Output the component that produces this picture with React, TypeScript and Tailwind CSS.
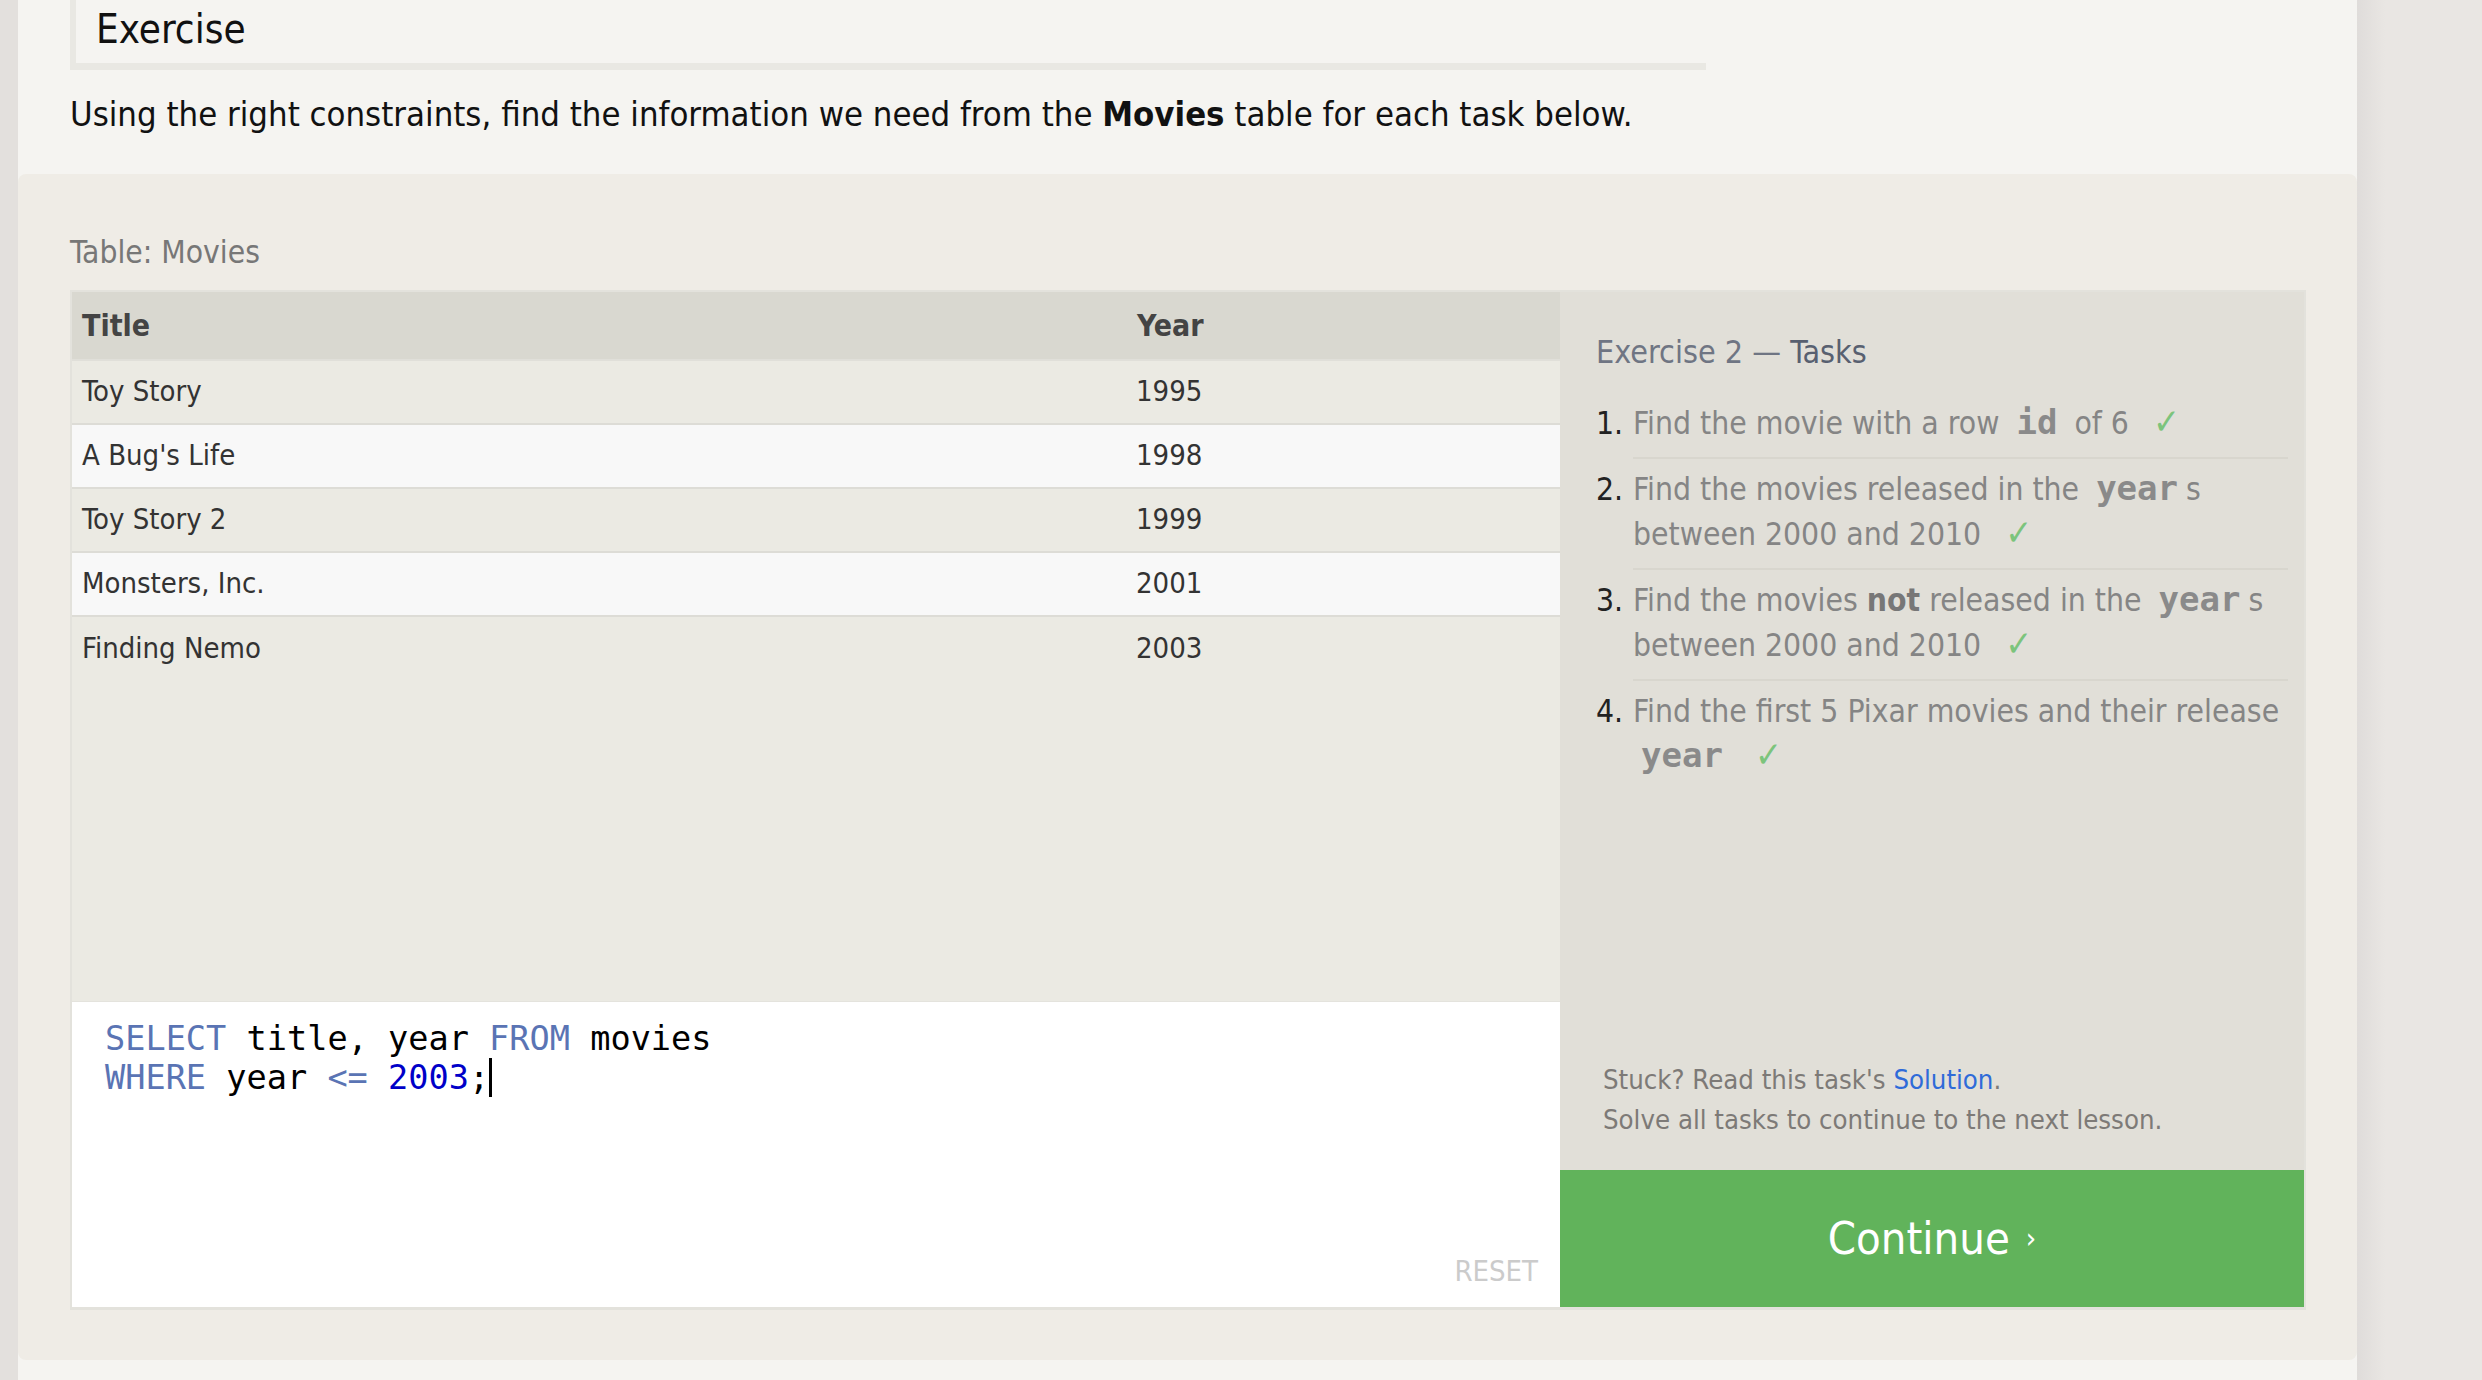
import React from "react";

const SANS = { fontFamily: '"DejaVu Sans Condensed", "DejaVu Sans", sans-serif', fontStretch: "condensed" as const };
const MONO = { fontFamily: '"DejaVu Sans Mono", monospace' };

const rows = [
  ["Toy Story", "1995"],
  ["A Bug's Life", "1998"],
  ["Toy Story 2", "1999"],
  ["Monsters, Inc.", "2001"],
  ["Finding Nemo", "2003"],
];

function Code({ children }: { children: React.ReactNode }) {
  return (
    <span className="px-[8px] font-bold text-[34px] leading-[0] text-[#8a8a8a]" style={MONO}>
      {children}
    </span>
  );
}

function Check() {
  return <span className="ml-[24px] text-[36px] leading-[0] text-[#7cc47c]">✓</span>;
}

function Task({ n, last, children }: { n: number; last?: boolean; children: React.ReactNode }) {
  return (
    <li className="flex">
      <div className="w-[37px] shrink-0 pt-[8px] leading-[45px] text-[#222]">{n}.</div>
      <div
        className={
          "flex-1 pt-[8px] pb-[11px] leading-[45px] text-[#858585] whitespace-nowrap " +
          (last ? "" : "border-b-2 border-[#d8d6ce]")
        }
      >
        {children}
      </div>
    </li>
  );
}

export default function App() {
  return (
    <div className="w-[2482px] h-[1380px] flex overflow-hidden bg-[#e9e6e3]" style={SANS}>
      <div className="w-[18px] shrink-0 bg-[#e3e0dd]" />
      <div className="w-[2339px] shrink-0 bg-[#f5f4f1] flex flex-col">
        <div className="px-[52px]">
          <div className="w-[1636px] border-l-[6px] border-b-[7px] border-[#e9e8e3] pl-[20px] pt-[6px] pb-[11px]">
            <h1 className="text-[40px] leading-[46px] text-[#111]">Exercise</h1>
          </div>
          <p className="mt-[20px] text-[34.4px] leading-[48px] text-[#111] whitespace-nowrap">
            Using the right constraints, find the information we need from the <b>Movies</b> table for each task below.
          </p>
        </div>

        <div className="mt-[36px] rounded-[8px] bg-[#efece6] pl-[52px] pr-[51px] pt-[58px] pb-[50px]">
          <div className="text-[31.5px] leading-[40px] text-[#777]">Table: Movies</div>
          <div className="mt-[18px] flex h-[1020px] border-2 border-b-[3px] border-[#e3e2dc]">
            {/* Left: table + editor */}
            <div className="flex-1 flex flex-col">
              <div className="h-[709px] bg-[#ebeae3]">
                <div className="flex h-[69px] items-center bg-[#d9d8d0] border-b-2 border-[#e0dfd9] font-bold text-[30px] text-[#444]">
                  <div className="w-[1053px] pl-[10px]">Title</div>
                  <div className="pl-[12px]">Year</div>
                </div>
                {rows.map(([t, y], i) => (
                  <div
                    key={t}
                    className={
                      "flex h-[64px] items-center text-[29px] text-[#333] " +
                      (i % 2 === 1 ? "bg-[#f8f8f8] " : "") +
                      (i < rows.length - 1 ? "border-b-2 border-[#dddcd6]" : "")
                    }
                  >
                    <div className="w-[1053px] pl-[10px]">{t}</div>
                    <div className="pl-[11px]">{y}</div>
                  </div>
                ))}
              </div>
              <div className="relative flex-1 bg-white border-t border-[#e4e3dd] pt-[17px] pl-[33px]">
                <div className="text-[33.6px] leading-[39px] text-black whitespace-pre" style={MONO}>
                  <div>
                    <span className="text-[#5a74b4]">SELECT</span> title, year <span className="text-[#5a74b4]">FROM</span> movies
                  </div>
                  <div>
                    <span className="text-[#5a74b4]">WHERE</span> year <span className="text-[#5a74b4]">&lt;=</span>{" "}
                    <span className="text-[#0000c8]">2003</span>;
                    <span className="inline-block w-[3px] h-[39px] bg-black align-[-8px]" />
                  </div>
                </div>
                <div className="absolute right-[22px] bottom-[21px] text-[29px] leading-[29px] text-[#cbcbcb]">RESET</div>
              </div>
            </div>

            {/* Right: tasks */}
            <div className="w-[744px] shrink-0 flex flex-col bg-[#e1dfd8]">
              <div className="flex-1 flex flex-col pt-[40px] pl-[36px] pr-[16px]">
                <h2 className="text-[32px] leading-[40px] text-[#6f7583]">
                  Exercise 2 — <span className="text-[#586070]">Tasks</span>
                </h2>
                <ol className="mt-[21px] text-[31.6px]">
                  <Task n={1}>
                    Find the movie with a row <Code>id</Code> of 6<Check />
                  </Task>
                  <Task n={2}>
                    Find the movies released in the <Code>year</Code>s
                    <br />
                    between 2000 and 2010<Check />
                  </Task>
                  <Task n={3}>
                    Find the movies <b className="text-[#777]">not</b> released in the <Code>year</Code>s
                    <br />
                    between 2000 and 2010<Check />
                  </Task>
                  <Task n={4} last>
                    Find the first 5 Pixar movies and their release
                    <br />
                    <Code>year</Code>
                    <Check />
                  </Task>
                </ol>
                <div className="mt-auto mb-[30px] pl-[7px] text-[27.3px] leading-[40px] text-[#7d7a77]">
                  <div>
                    Stuck? Read this task's <span className="text-[#2f6bd9]">Solution</span>.
                  </div>
                  <div>Solve all tasks to continue to the next lesson.</div>
                </div>
              </div>
              <div className="h-[137px] shrink-0 bg-[#61b35b] flex items-center justify-center text-white text-[45px]">
                Continue <span className="ml-[16px] text-[29px]">›</span>
              </div>
            </div>
          </div>
        </div>
      </div>
      <div className="flex-1 flex">
        <div className="w-[28px] bg-gradient-to-r from-[#dfdcda] to-[#e9e6e3]" />
        <div className="flex-1" />
      </div>
    </div>
  );
}
